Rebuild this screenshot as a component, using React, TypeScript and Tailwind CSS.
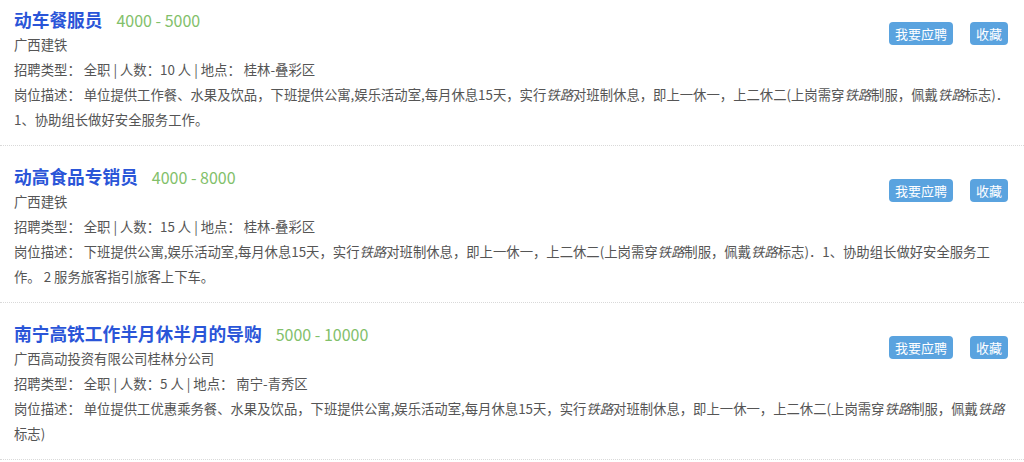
const font = { fontFamily: '"Noto Sans CJK SC", "Noto Sans", sans-serif' }

type Part = string | { rail: true }

type Job = {
  title: string
  salary: string
  company: string
  count: number
  place: string
  desc: Part[][]
}

const R: Part = { rail: true }

const jobs: Job[] = [
  {
    title: '动车餐服员',
    salary: '4000 - 5000',
    company: '广西建铁',
    count: 10,
    place: '桂林-叠彩区',
    desc: [
      ['单位提供工作餐、水果及饮品，下班提供公寓,娱乐活动室,每月休息15天，实行', R, '对班制休息，即上一休一，上二休二(上岗需穿', R, '制服，佩戴', R, '标志)．'],
      ['1、协助组长做好安全服务工作。'],
    ],
  },
  {
    title: '动高食品专销员',
    salary: '4000 - 8000',
    company: '广西建铁',
    count: 15,
    place: '桂林-叠彩区',
    desc: [
      ['下班提供公寓,娱乐活动室,每月休息15天，实行', R, '对班制休息，即上一休一，上二休二(上岗需穿', R, '制服，佩戴', R, '标志)．1、协助组长做好安全服务工'],
      ['作。 2 服务旅客指引旅客上下车。'],
    ],
  },
  {
    title: '南宁高铁工作半月休半月的导购',
    salary: '5000 - 10000',
    company: '广西高动投资有限公司桂林分公司',
    count: 5,
    place: '南宁-青秀区',
    desc: [
      ['单位提供工优惠乘务餐、水果及饮品，下班提供公寓,娱乐活动室,每月休息15天，实行', R, '对班制休息，即上一休一，上二休二(上岗需穿', R, '制服，佩戴', R],
      ['标志)'],
    ],
  },
]

function Line({ parts }: { parts: Part[] }) {
  return (
    <>
      {parts.map((p, i) =>
        typeof p === 'string' ? <span key={i}>{p}</span> : <i key={i} className="italic">铁路</i>,
      )}
    </>
  )
}

function JobItem({ job, first }: { job: Job; first: boolean }) {
  return (
    <div className={`flex border-b border-dotted border-[#d9d9d9] pl-[14px] pr-[16px] pt-[17px] pb-[13px] ${first ? '-mt-[11px]' : ''}`}>
      <div className="min-w-0 flex-1 text-[13.35px] text-[#555]">
        <div className="flex items-baseline leading-[26px]">
          <span className="text-[17.7px] font-bold text-[#2a55d8]">{job.title}</span>
          <span className="ml-[14px] text-[16px] text-[#82c06a]">{job.salary}</span>
        </div>
        <div className="leading-[24px]">{job.company}</div>
        <div className="leading-[25px]">
          招聘类型： 全职 | 人数：{job.count} 人 | 地点： {job.place}
        </div>
        <div className="leading-[25px]">
          {job.desc.map((parts, i) => (
            <div key={i} className="whitespace-nowrap">
              {i === 0 && <span>岗位描述： </span>}
              <Line parts={parts} />
            </div>
          ))}
        </div>
      </div>
      <div className="mt-[16px] flex h-[23px] shrink-0 gap-[17px] whitespace-nowrap">
        <button className="h-[23px] rounded-sm bg-[#5aa3df] px-[6px] text-[13px] leading-[23px] text-white">我要应聘</button>
        <button className="h-[23px] rounded-sm bg-[#5aa3df] px-[6px] text-[13px] leading-[23px] text-white">收藏</button>
      </div>
    </div>
  )
}

export default function App() {
  return (
    <div className="h-[462px] w-[1024px] overflow-hidden bg-white" style={font}>
      {jobs.map((job, i) => (
        <JobItem key={i} job={job} first={i === 0} />
      ))}
    </div>
  )
}
